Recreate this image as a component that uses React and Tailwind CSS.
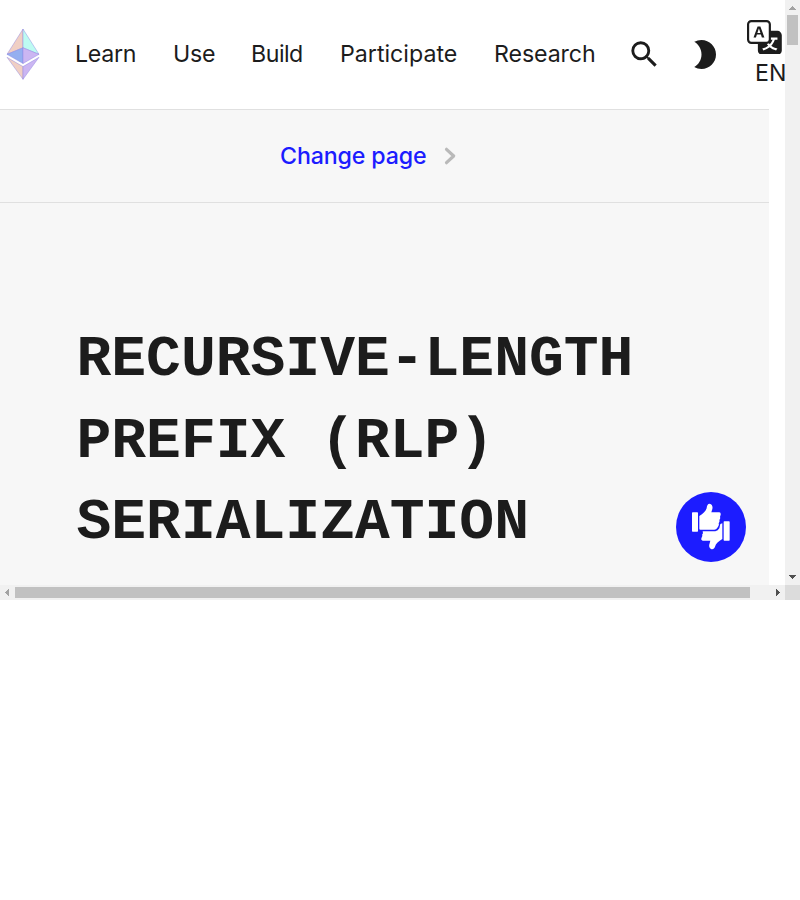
import React from "react";
import { MdSearch, MdBrightness2 } from "react-icons/md";
import { BsTranslate } from "react-icons/bs";

function EthLogo() {
  return (
    <svg className="mt-[-2px] ml-[6px] h-[52px] w-[34px] shrink-0" viewBox="0 0 34 52" stroke="#8a80e0" strokeOpacity="0.55" strokeWidth="0.8" strokeLinejoin="round">
      <path d="M17 1 1 26.3 17 19.8Z" fill="#f0cfc4" />
      <path d="M17 1 33 26.3 17 19.8Z" fill="#bdfbf2" />
      <path d="M17 19.8 1 26.3 17 35.5Z" fill="#94aff0" />
      <path d="M17 19.8 33 26.3 17 35.5Z" fill="#cbb6f2" />
      <path d="M1 29.3 17 38.6V51.3Z" fill="#f0cfc4" />
      <path d="M33 29.3 17 38.6V51.3Z" fill="#cbb6f2" />
    </svg>
  );
}

function FeedbackIcon() {
  return (
    <svg className="size-[70px]" viewBox="48 36 210 210" fill="#fff">
      <rect x="96" y="97" width="18" height="58" rx="2" />
      <path d="M118 108C129 101 138 94 140 84C141 76 143 71 149 71C156 72 159 79 157 87L154 97H178Q183 98 182 104L180 111Q182 115 178 120Q180 125 176 130Q178 136 174 140L171 145Q169 149 163 149H121Q118 149 118 146Z" />
      <path d="M128 154H166Q174 152 178 145L181 132L187 130V177C176 184 167 191 165 200C163 206 159 209 153 207C147 204 146 197 149 190L151 182H128Q122 181 124 175L127 168Q125 164 129 160Z" />
      <rect x="191" y="124" width="18" height="58" rx="2" />
    </svg>
  );
}

function Arrow({ points, dim }) {
  return (
    <svg className="size-[15px] shrink-0" viewBox="0 0 15 15" shapeRendering="crispEdges">
      <polygon points={points} fill={dim ? "#a3a3a3" : "#505050"} />
    </svg>
  );
}

function Header() {
  return (
    <header className="flex h-[109px] w-[785px] items-center overflow-hidden bg-white text-[23.2px] leading-[37px] font-normal">
      <EthLogo />
      <nav className="flex shrink-0">
        <a className="ml-[35px] w-[98px] tracking-[-0.3px]">Learn</a>
        <a className="w-[78px] tracking-[-0.2px]">Use</a>
        <a className="w-[89px] tracking-[-0.5px]">Build</a>
        <a className="w-[154px]">Participate</a>
        <a className="w-[133px] tracking-[-0.1px]">Research</a>
      </nav>
      <MdSearch className="size-[34.8px] shrink-0" />
      <MdBrightness2 className="ml-[25.4px] size-[34.8px] shrink-0" />
      <div className="ml-[25px] flex shrink-0 flex-col">
        <BsTranslate className="size-[34.8px]" />
        <span className="ml-[8px] h-[35px] leading-[39px]">EN</span>
      </div>
    </header>
  );
}

export default function App() {
  return (
    <div className="h-[900px] w-[800px] overflow-hidden bg-white font-['Inter',sans-serif] text-[#1c1c1c]">
      <div className="flex h-[585px]">
        <div className="relative w-[785px] overflow-hidden">
          <Header />
          <main className="h-[476px] w-[769px] bg-[#f7f7f7]">
            <div className="flex h-[94px] items-center border-y border-[#e0e0e0] pl-[280px] text-[23.2px] text-[#1c1cff]">
              <span className="w-[164px] font-medium tracking-[-0.13px]">Change page</span>
              <svg className="h-[18px] w-[13px]" viewBox="0 0 13 18" fill="none" stroke="#b9b9b9" strokeWidth="3.2" strokeLinecap="round" strokeLinejoin="round">
                <path d="M2.5 2.3 9.7 9 2.5 15.7" />
              </svg>
            </div>
            <h1 className="px-[76.5px] pt-[116.4px] font-['Liberation_Mono',monospace] text-[58px] leading-[81.2px] font-bold uppercase">
              Recursive-length<br />prefix (RLP)<br />serialization
            </h1>
          </main>
          <button className="absolute top-[492px] left-[676px] size-[70px] rounded-full bg-[#1c1cff]" aria-label="Feedback">
            <FeedbackIcon />
          </button>
        </div>
        <div className="flex w-[15px] flex-col items-center bg-[#f1f1f1]">
          <Arrow points="4,10 11,10 7.5,6" dim />
          <div className="h-[30px] w-[11px] bg-[#c1c1c1]" />
          <div className="flex-1" />
          <Arrow points="4,5 11,5 7.5,9" />
        </div>
      </div>
      <div className="flex h-[15px] items-center bg-[#f1f1f1]">
        <Arrow points="9,4 9,11 5,7.5" dim />
        <div className="h-[11px] w-[735px] bg-[#c1c1c1]" />
        <div className="flex-1" />
        <Arrow points="6,4 6,11 10,7.5" />
        <div className="size-[15px] bg-[#dcdcdc]" />
      </div>
    </div>
  );
}
